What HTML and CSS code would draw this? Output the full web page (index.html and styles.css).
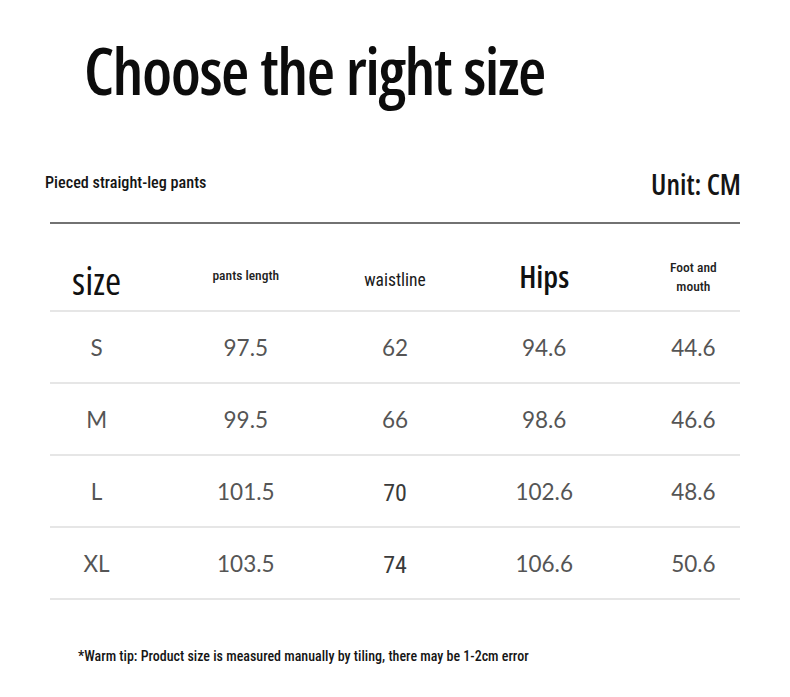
FILE: index.html
```html
<!DOCTYPE html>
<html lang="en">
<head>
<meta charset="utf-8">
<title>Choose the right size</title>
<link rel="stylesheet" href="styles.css">
</head>
<body>
<main class="page">
  <h1 class="title">Choose the right size</h1>
  <div class="meta">
    <span class="product">Pieced straight-leg pants</span>
    <span class="unit">Unit: CM</span>
  </div>
  <div class="table">
    <div class="row head">
      <div class="cell h-size">size</div>
      <div class="cell h-small">pants length</div>
      <div class="cell h-mid">waistline</div>
      <div class="cell h-big">Hips</div>
      <div class="cell h-small h-two">Foot and<br>mouth</div>
    </div>
    <div class="row">
      <div class="cell">S</div>
      <div class="cell">97.5</div>
      <div class="cell">62</div>
      <div class="cell">94.6</div>
      <div class="cell">44.6</div>
    </div>
    <div class="row">
      <div class="cell">M</div>
      <div class="cell">99.5</div>
      <div class="cell">66</div>
      <div class="cell">98.6</div>
      <div class="cell">46.6</div>
    </div>
    <div class="row">
      <div class="cell">L</div>
      <div class="cell">101.5</div>
      <div class="cell alt">70</div>
      <div class="cell">102.6</div>
      <div class="cell">48.6</div>
    </div>
    <div class="row">
      <div class="cell">XL</div>
      <div class="cell">103.5</div>
      <div class="cell alt">74</div>
      <div class="cell">106.6</div>
      <div class="cell">50.6</div>
    </div>
  </div>
  <p class="tip">*Warm tip: Product size is measured manually by tiling, there may be 1-2cm error</p>
</main>
</body>
</html>
```
FILE: styles.css
```css
html, body {
  margin: 0;
  padding: 0;
  background: #ffffff;
}

.page {
  width: 790px;
  padding-top: 36px;
  color: #111;
}

.title {
  margin: 0;
  padding-left: 84px;
  font-family: "Open Sans", sans-serif;
  font-stretch: 75%;
  font-weight: 600;
  font-size: 65px;
  line-height: 68px;
  letter-spacing: -1.5px;
  word-spacing: 2px;
  color: #0c0c0c;
}

.meta {
  margin: 66px 49px 0 45px;
  display: flex;
  justify-content: space-between;
  align-items: flex-start;
}

.product {
  margin-top: 5px;
  font-family: "Roboto Condensed", sans-serif;
  font-weight: 500;
  font-size: 16.2px;
  line-height: 16px;
  color: #151515;
}

.unit {
  font-family: "Open Sans", sans-serif;
  font-stretch: 75%;
  font-weight: 600;
  font-size: 28.5px;
  line-height: 28px;
  color: #151515;
}

.table {
  margin: 24px 50px 0;
  border-top: 2px solid #727272;
}

.row {
  display: grid;
  grid-template-columns: repeat(5, 1fr);
  column-gap: 56px;
  align-items: center;
  justify-items: center;
  box-sizing: border-box;
  height: 72px;
  border-bottom: 2px solid #e6e6e6;
}

.row.head {
  height: 88px;
  padding-top: 24px;
}

.cell {
  text-align: center;
  font-family: Lato, sans-serif;
  font-size: 22.5px;
  line-height: 26px;
  color: #555;
  white-space: nowrap;
  margin-top: 2px;
}

.cell.alt {
  font-family: "Roboto Condensed", sans-serif;
  font-size: 24px;
  color: #3a3a3a;
  margin-top: 4px;
}

.h-size {
  font-family: "Open Sans", sans-serif;
  font-stretch: 75%;
  font-weight: 500;
  font-size: 39px;
  line-height: 40px;
  color: #111;
  margin-top: 2px;
}

.h-small {
  font-family: "Roboto Condensed", sans-serif;
  font-weight: 500;
  font-size: 13.5px;
  line-height: 19px;
  color: #222;
  margin-top: -8px;
}

.h-two {
  margin-top: -4px;
}

.h-mid {
  font-family: "Roboto Condensed", sans-serif;
  font-size: 17.5px;
  line-height: 20px;
  color: #1a1a1a;
}

.h-big {
  font-family: "Open Sans", sans-serif;
  font-stretch: 75%;
  font-weight: 600;
  font-size: 31px;
  line-height: 34px;
  color: #111;
  margin-top: -6px;
}

.tip {
  margin: 46px 0 0;
  padding-left: 78px;
  font-family: "Roboto Condensed", sans-serif;
  font-weight: 500;
  font-size: 14px;
  line-height: 20px;
  color: #151515;
}
```
